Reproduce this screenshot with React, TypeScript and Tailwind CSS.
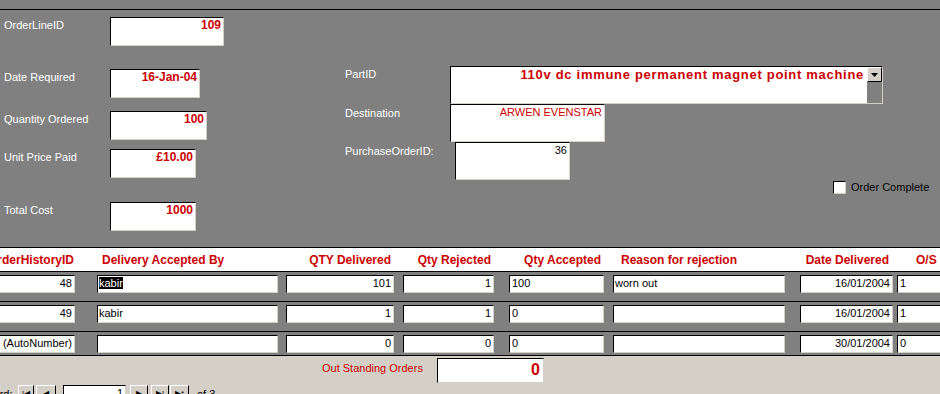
import React from 'react'

const sunken =
  'border border-t-black border-l-black border-r-[#d4d0c8] border-b-[#d4d0c8] bg-white'
const raised =
  'border border-t-white border-l-white border-r-black border-b-black bg-[#d4d0c8]'

function TopField({
  label,
  value,
  className,
  boxClass,
}: {
  label: string
  value: string
  className: string
  boxClass: string
}) {
  return (
    <div className={`flex items-start ${className}`}>
      <div className="w-[110px] pl-[4px] pt-[1px] text-[11px] leading-[14px] text-white">
        {label}
      </div>
      <div
        className={`${sunken} ${boxClass} h-[29px] pr-[2px] text-right text-[12px] font-bold leading-[14px] text-[#cc0000]`}
      >
        {value}
      </div>
    </div>
  )
}

const cols = [
  { box: 'w-[105px] -ml-[30px]', cell: 'text-right pr-[2px]', head: 'text-right pr-[1px]' },
  { box: 'w-[181px] ml-[22px]', cell: 'text-left pl-[1px]', head: 'text-left pl-[5px]' },
  { box: 'w-[108px] ml-[8px]', cell: 'text-right pr-[2px]', head: 'text-right pr-[3px]' },
  { box: 'w-[91px] ml-[9px]', cell: 'text-right pr-[2px]', head: 'text-right pr-[3px]' },
  { box: 'w-[95px] ml-[15px]', cell: 'text-left pl-[2px]', head: 'text-right pr-[3px]' },
  { box: 'w-[172px] ml-[9px]', cell: 'text-left pl-[1px]', head: 'text-left pl-[8px]' },
  { box: 'w-[93px] ml-[15px]', cell: 'text-right pr-[2px]', head: 'text-right pr-[4px]' },
  { box: 'w-[60px] ml-[4px]', cell: 'text-left pl-[2px]', head: 'text-left pl-[19px]' },
]

const headers = [
  'OrderHistoryID',
  'Delivery Accepted By',
  'QTY Delivered',
  'Qty Rejected',
  'Qty Accepted',
  'Reason for rejection',
  'Date Delivered',
  'O/S',
]

const rows = [
  ['48', 'kabir', '101', '1', '100', 'worn out', '16/01/2004', '1'],
  ['49', 'kabir', '1', '1', '0', '', '16/01/2004', '1'],
  ['(AutoNumber)', '', '0', '0', '0', '', '30/01/2004', '0'],
]

function GridRow({ values, selected, last }: { values: string[]; selected?: boolean; last?: boolean }) {
  return (
    <div
      className={`flex shrink-0 items-start bg-[#808080] pt-[3px] border-b border-black ${
        last ? 'h-[24px]' : 'h-[30px]'
      }`}
    >
      {cols.map((c, i) => (
        <div
          key={i}
          className={`${sunken} ${c.box} ${c.cell} h-[18px] shrink-0 overflow-hidden whitespace-nowrap text-[11px] leading-[15px] text-black`}
        >
          {selected && i === 1 ? (
            <span className="bg-black text-white">{values[i]}</span>
          ) : (
            values[i]
          )}
        </div>
      ))}
    </div>
  )
}

function NavButton({ className, children }: { className: string; children: React.ReactNode }) {
  return (
    <div
      className={`${raised} ${className} h-[17px] shrink-0 flex items-center justify-center text-[8px] leading-none text-black`}
    >
      {children}
    </div>
  )
}

export default function App() {
  return (
    <div className="w-[940px] h-[394px] overflow-hidden bg-[#808080] flex flex-col font-['Liberation_Sans',Arial,sans-serif]">
      <div className="h-[10px] shrink-0 border-b border-black" />

      {/* Main record fields */}
      <div className="flex h-[237px] shrink-0">
        <div className="w-[345px] shrink-0 flex flex-col">
          <TopField label="OrderLineID" value="109" className="mt-[7px]" boxClass="w-[114px]" />
          <TopField label="Date Required" value="16-Jan-04" className="mt-[23px]" boxClass="w-[90px]" />
          <TopField label="Quantity Ordered" value="100" className="mt-[13px]" boxClass="w-[97px]" />
          <TopField label="Unit Price Paid" value="£10.00" className="mt-[9px]" boxClass="w-[86px]" />
          <TopField label="Total Cost" value="1000" className="mt-[24px]" boxClass="w-[86px]" />
        </div>

        <div className="flex-1 flex flex-col">
          <div className="mt-[56px] flex items-start">
            <div className="w-[105px] pt-[1px] text-[11px] leading-[14px] text-white">PartID</div>
            <div className={`${sunken} w-[433px] h-[38px] flex`}>
              <div className="flex-1 pr-[3px] text-right text-[13px] font-bold tracking-[0.7px] leading-[16px] text-[#cc0000] whitespace-nowrap">
                110v dc immune permanent magnet point machine
              </div>
              <div className="w-[15px] flex flex-col">
                <div className={`${raised} h-[15px] flex items-center justify-center`}>
                  <svg width="7" height="4" viewBox="0 0 7 4">
                    <polygon points="0,0 7,0 3.5,4" fill="#000" />
                  </svg>
                </div>
                <div className="flex-1 bg-[#808080]" />
              </div>
            </div>
          </div>
          <div className="flex items-start">
            <div className="w-[105px] pt-[2px] text-[11px] leading-[14px] text-white">Destination</div>
            <div className={`${sunken} w-[155px] h-[38px] pr-[2px] text-right text-[11px] leading-[14px] text-[#cc0000]`}>
              ARWEN EVENSTAR
            </div>
          </div>
          <div className="flex items-start">
            <div className="w-[110px] pt-[2px] text-[11px] leading-[14px] text-white">PurchaseOrderID:</div>
            <div className={`${sunken} w-[115px] h-[38px] pr-[2px] text-right text-[11px] leading-[14px] text-black`}>
              36
            </div>
          </div>
          <div className="ml-[488px] flex items-center gap-[5px]">
            <div className={`${sunken} w-[13px] h-[13px]`} />
            <span className="text-[11px] leading-[14px] text-black">Order Complete</span>
          </div>
        </div>
      </div>

      {/* Delivery history header */}
      <div className="flex shrink-0 h-[25px] items-center bg-white border-y border-black">
        {cols.map((c, i) => (
          <div
            key={i}
            className={`${c.box} ${c.head} shrink-0 whitespace-nowrap text-[12px] font-bold leading-[14px] text-[#cc0000]`}
          >
            {headers[i]}
          </div>
        ))}
      </div>

      <GridRow values={rows[0]} selected />
      <GridRow values={rows[1]} />
      <GridRow values={rows[2]} last />

      {/* Form footer */}
      <div className="flex-1 bg-[#d4d0c8] flex flex-col">
        <div className="mt-[2px] flex items-start">
          <div className="ml-[322px] w-[115px] pt-[3px] text-[11px] leading-[14px] text-[#cc0000]">
            Out Standing Orders
          </div>
          <div className={`${sunken} w-[107px] h-[25px] pr-[3px] text-right text-[16px] font-bold leading-[22px] text-[#cc0000]`}>
            0
          </div>
        </div>
        <div className="mt-[2px] flex items-start">
          <div className="-ml-[26px] w-[44px] pt-[2px] text-[11px] leading-[14px] text-black">Record:</div>
          <NavButton className="w-[16px]">|◀</NavButton>
          <NavButton className="ml-[2px] w-[20px]">◀</NavButton>
          <div className={`${sunken} ml-[7px] w-[63px] h-[17px] pr-[2px] text-right text-[11px] leading-[15px]`}>1</div>
          <NavButton className="ml-[4px] w-[18px]">▶</NavButton>
          <NavButton className="ml-[3px] w-[18px]">▶|</NavButton>
          <NavButton className="ml-[1px] w-[19px]">▶*</NavButton>
          <div className="ml-[8px] pt-[2px] text-[11px] leading-[14px] text-black">of 3</div>
        </div>
      </div>
    </div>
  )
}
